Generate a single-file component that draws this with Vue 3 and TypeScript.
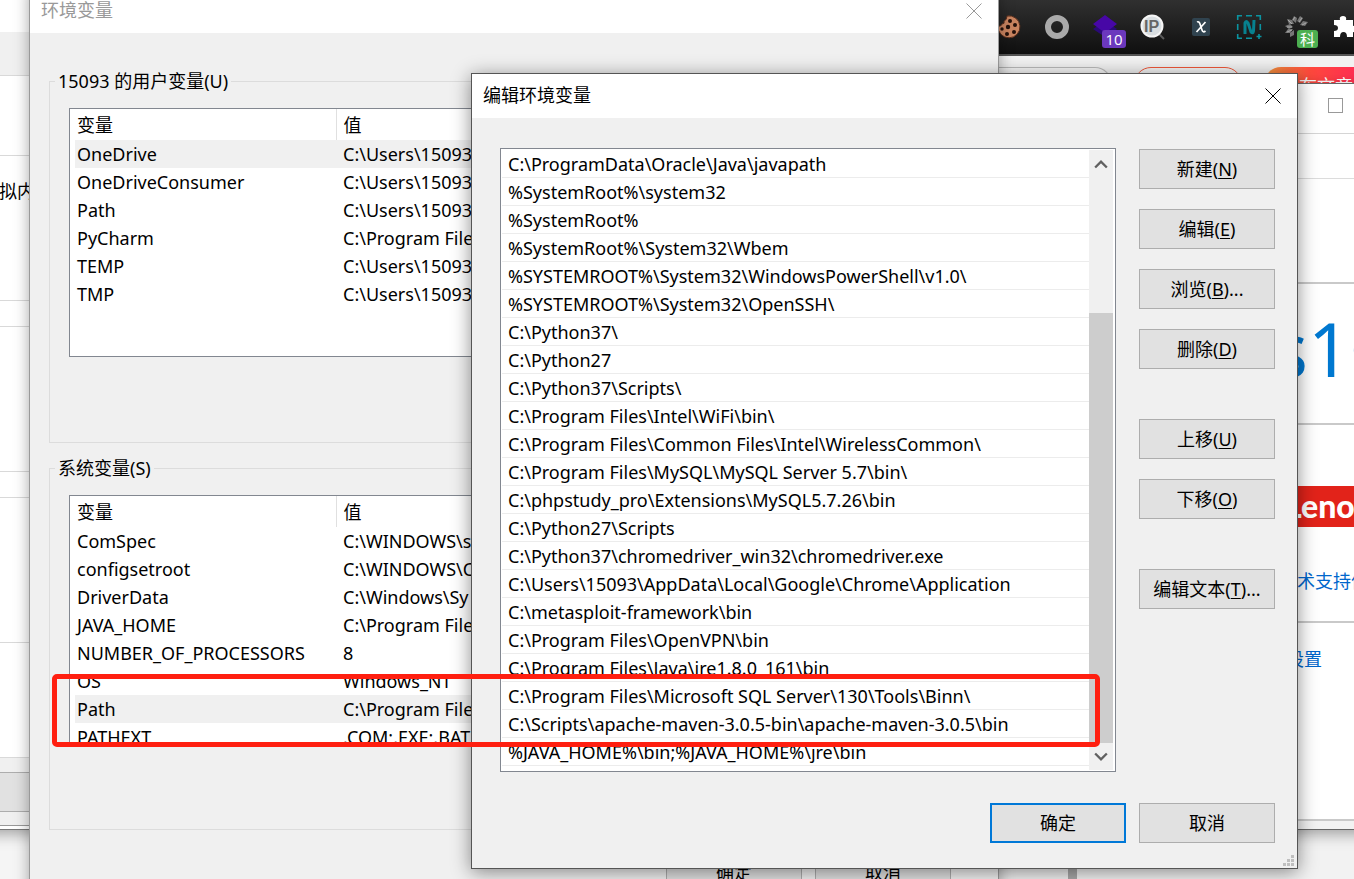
<script setup lang="ts">
interface Variable {
  name: string
  value: string
}
interface Action {
  label: string
  key: string
  more?: boolean
  spaced?: boolean
}

const userVars: Variable[] = [
  { name: 'OneDrive', value: 'C:\\Users\\15093' },
  { name: 'OneDriveConsumer', value: 'C:\\Users\\15093' },
  { name: 'Path', value: 'C:\\Users\\15093' },
  { name: 'PyCharm', value: 'C:\\Program File' },
  { name: 'TEMP', value: 'C:\\Users\\15093' },
  { name: 'TMP', value: 'C:\\Users\\15093' },
]

const systemVars: Variable[] = [
  { name: 'ComSpec', value: 'C:\\WINDOWS\\s' },
  { name: 'configsetroot', value: 'C:\\WINDOWS\\C' },
  { name: 'DriverData', value: 'C:\\Windows\\Sy' },
  { name: 'JAVA_HOME', value: 'C:\\Program File' },
  { name: 'NUMBER_OF_PROCESSORS', value: '8' },
  { name: 'OS', value: 'Windows_NT' },
  { name: 'Path', value: 'C:\\Program File' },
  { name: 'PATHEXT', value: '.COM;.EXE;.BAT' },
]

const groups = [
  { title: '15093 的用户变量(U)', rows: userVars, selected: 0 },
  { title: '系统变量(S)', rows: systemVars, selected: 6 },
]

const paths: string[] = [
  'C:\\ProgramData\\Oracle\\Java\\javapath',
  '%SystemRoot%\\system32',
  '%SystemRoot%',
  '%SystemRoot%\\System32\\Wbem',
  '%SYSTEMROOT%\\System32\\WindowsPowerShell\\v1.0\\',
  '%SYSTEMROOT%\\System32\\OpenSSH\\',
  'C:\\Python37\\',
  'C:\\Python27',
  'C:\\Python37\\Scripts\\',
  'C:\\Program Files\\Intel\\WiFi\\bin\\',
  'C:\\Program Files\\Common Files\\Intel\\WirelessCommon\\',
  'C:\\Program Files\\MySQL\\MySQL Server 5.7\\bin\\',
  'C:\\phpstudy_pro\\Extensions\\MySQL5.7.26\\bin',
  'C:\\Python27\\Scripts',
  'C:\\Python37\\chromedriver_win32\\chromedriver.exe',
  'C:\\Users\\15093\\AppData\\Local\\Google\\Chrome\\Application',
  'C:\\metasploit-framework\\bin',
  'C:\\Program Files\\OpenVPN\\bin',
  'C:\\Program Files\\Java\\jre1.8.0_161\\bin',
  'C:\\Program Files\\Microsoft SQL Server\\130\\Tools\\Binn\\',
  'C:\\Scripts\\apache-maven-3.0.5-bin\\apache-maven-3.0.5\\bin',
  '%JAVA_HOME%\\bin;%JAVA_HOME%\\jre\\bin',
]

const actions: Action[] = [
  { label: '新建', key: 'N' },
  { label: '编辑', key: 'E' },
  { label: '浏览', key: 'B', more: true },
  { label: '删除', key: 'D' },
  { label: '上移', key: 'U', spaced: true },
  { label: '下移', key: 'O' },
  { label: '编辑文本', key: 'T', more: true, spaced: true },
]
</script>

<template>
  <main class="desktop">
    <section class="browser">
      <div class="toolbar">
        <svg class="ext" viewBox="0 0 24 24">
          <path d="M10 1 A11 11 0 1 1 1 11 Q4 12 5 9 Q8 9 7 6 Q10 5 10 1Z" fill="#c98460" stroke="#5b2f1d" />
          <g fill="#24110b"><circle cx="13" cy="6" r="2" /><circle cx="18" cy="10" r="2" /><circle cx="11" cy="12" r="2.2" /><circle cx="17" cy="17" r="2" /><circle cx="10" cy="19" r="2" /><circle cx="5" cy="14" r="1.7" /></g>
        </svg>
        <svg class="ext" viewBox="0 0 24 24"><circle cx="12" cy="12" r="9" fill="none" stroke="#a9a9a9" stroke-width="6" /></svg>
        <span class="badged">
          <svg class="ext" viewBox="0 0 24 24"><path d="M0 14 L12 6 L24 14 L12 22Z" fill="#2a0a78" /><path d="M0 9 L12 0 L24 9 L12 18Z" fill="#4707a6" /></svg>
          <b class="badge purple">10</b>
        </span>
        <svg class="ext" viewBox="0 0 24 24">
          <path d="M17 18 L23 24" stroke="#5a5a5a" stroke-width="2" />
          <circle cx="11" cy="11" r="10.500" fill="#d9dee1" stroke="#f5f5f5" stroke-width="2" />
          <text x="3" y="17" class="ip">IP</text>
        </svg>
        <svg class="ext" viewBox="0 0 24 24"><rect x="3" y="3" width="18" height="18" rx="2" fill="#30434f" /><path d="M8 7 Q10 6 11 9 L13 15 Q14 18 16.500 16 M16.500 7 L7.500 17" fill="none" stroke="#fff" stroke-width="1.700" /></svg>
        <svg class="ext" viewBox="0 0 24 24">
          <path d="M0.700 5 V0.700 H5 M9 .7 H15 M19 .7 H23.300 V5 M.7 9 V15 M23.300 9 V15 M.7 19 V23.300 H5 M9 23.300 H15 M22 19 V24 M19.500 21.500 H24.500" fill="none" stroke="#0b93a0" stroke-width="1.600" />
          <path d="M8 19 V8 Q9 5 11 8 L14 17 Q16 19 16.500 16 L17 5" fill="none" stroke="#07818f" stroke-width="3" />
        </svg>
        <span class="badged">
          <svg class="ext" viewBox="0 0 24 24">
            <path d="M9 1 L12 3 L11 8 L7 5Z M15 1 L18 3 L15 8 L12 6Z M23 7 L20 11 L15 10 L18 6Z M2 4 L7 5 L9 9 L4 9Z M0 11 L5 9 L8 12 L4 14Z M0 18 L3 14 L8 14 L5 18Z M5 22 L5 18 L9 15 L9 20Z" fill="#777" />
            <path d="M10 2 L8 5 M17 3 L14 7 M21 8 L17 10 M3 5 L7 9 M2 12 L7 12 M2 17 L7 15" stroke="#a8a8a8" />
          </svg>
          <b class="badge green">科</b>
        </span>
        <svg class="ext" viewBox="0 0 24 24"><path d="M1 5 H7 Q6 1 10 1 Q14 1 13 5 H20 V11 Q24 10 24 14 Q24 18 20 17 V22 H14 Q14 17 10.500 17 Q7 17 7 22 H1 V16 Q5 16 5 13 Q5 10 1 10Z" fill="#fff" /></svg>
      </div>
      <div class="page-head">
        <span class="pill search"></span>
        <span class="pill outline"></span>
        <span class="pill publish">发布文章</span>
      </div>
    </section>

    <section class="system-window">
      <div class="system-title"><button class="maximize" aria-label="最大化"></button></div>
      <div class="system-nav"></div>
      <div class="system-gap"></div>
      <div class="edition"><span>s</span><span>10</span></div>
      <div class="vendor"><strong class="logo">Lenovo</strong><a href="#support">术支持信息</a></div>
      <div class="more"><a href="#settings">设置</a></div>
    </section>
    <div class="page-edge"></div>

    <section class="options-window">
      <div class="strip head"></div>
      <div class="strip tabs"></div>
      <div class="strip intro"></div>
      <div class="strip memory">拟内</div>
      <div class="strip gap"></div>
      <div class="strip block"></div>
      <div class="strip gap"></div>
      <div class="strip block"></div>
      <div class="strip rest"></div>
      <div class="strip foot"><button class="stub" aria-label="确定"></button></div>
    </section>

    <section class="dialog env" aria-label="环境变量">
      <header class="titlebar muted">
        <span>环境变量</span>
        <button class="close" aria-label="关闭"><svg viewBox="0 0 16 16"><path d="M.5 .5 L15.500 15.500 M15.500 .5 L.5 15.500" /></svg></button>
      </header>
      <div class="env-body">
        <fieldset v-for="g in groups" :key="g.title" class="group">
          <legend>{{ g.title }}</legend>
          <div class="var-list">
            <table>
              <thead><tr><th>变量</th><th>值</th></tr></thead>
              <tbody>
                <tr v-for="(r, i) in g.rows" :key="r.name" :class="{ selected: i === g.selected }">
                  <td>{{ r.name }}</td><td>{{ r.value }}</td>
                </tr>
              </tbody>
            </table>
          </div>
        </fieldset>
        <footer class="env-foot"><button class="btn">确定</button><button class="btn">取消</button></footer>
      </div>
    </section>

    <section class="dialog edit" aria-label="编辑环境变量">
      <header class="titlebar">
        <span>编辑环境变量</span>
        <button class="close" aria-label="关闭"><svg viewBox="0 0 16 16"><path d="M.5 .5 L15.500 15.500 M15.500 .5 L.5 15.500" /></svg></button>
      </header>
      <div class="edit-body">
        <div class="path-box">
          <ul class="paths"><li v-for="p in paths" :key="p">{{ p }}</li></ul>
          <div class="scrollbar">
            <button aria-label="向上滚动"><svg viewBox="0 0 12 10"><path d="M1 8 L6 3 L11 8" /></svg></button>
            <div class="track"><div class="thumb"></div></div>
            <button aria-label="向下滚动"><svg viewBox="0 0 12 10"><path d="M1 2 L6 7 L11 2" /></svg></button>
          </div>
        </div>
        <div class="actions">
          <button v-for="a in actions" :key="a.key" class="btn" :class="{ spaced: a.spaced }">{{ a.label }}(<u>{{ a.key }}</u>){{ a.more ? '...' : '' }}</button>
        </div>
      </div>
      <footer class="edit-foot"><button class="btn primary">确定</button><button class="btn">取消</button></footer>
      <svg class="grip" viewBox="0 0 11 11"><path d="M8 0h3v3h-3z M4 4h3v3h-3z M8 4h3v3h-3z M0 8h3v3h-3z M4 8h3v3h-3z M8 8h3v3h-3z" fill="#bfbfbf" /></svg>
    </section>

    <div class="marker"></div>
  </main>
</template>

<style>
body {
  margin: 0;
  overflow: hidden;
}
</style>

<style scoped>
* {
  box-sizing: border-box;
}
.desktop {
  position: relative;
  height: 100vh;
  overflow: hidden;
  background: #f5f5f5;
  color: #000;
  font: 18px/26px "Noto Sans", "Noto Sans CJK SC", sans-serif;
}
button {
  font: inherit;
  color: inherit;
  padding: 0;
}

/* browser */
.browser {
  position: absolute;
  inset: 0 0 auto 997px;
  height: 100%;
  background: #f2f2f2;
}
.toolbar {
  display: flex;
  align-items: center;
  gap: 24px;
  height: 56px;
  border-bottom: 2px solid #555;
  background: linear-gradient(#303030, #0f0f0f);
}
.ext {
  display: block;
  flex: none;
  width: 24px;
  height: 24px;
  overflow: visible;
}
.badged {
  position: relative;
}
.badge {
  position: absolute;
  left: 9px;
  top: 15px;
  min-width: 21px;
  height: 18px;
  border-radius: 3px;
  color: #fff;
  font: 15px/18px "Open Sans", "Noto Sans CJK SC", sans-serif;
  text-align: center;
}
.purple {
  min-width: 24px;
  background: #6b38bd;
}
.green {
  left: 12px;
  background: #4caf50;
}
.ip {
  font: bold 16px "Liberation Sans", sans-serif;
  fill: #666;
}
.page-head {
  display: flex;
  gap: 22px;
  padding-top: 11px;
}
.pill {
  flex: none;
  height: 34px;
  border-radius: 17px;
}
.search {
  width: 115px;
  border: 1px solid #bbb;
  border-left: 0;
  border-radius: 0 17px 17px 0;
  background: #f7f7f7;
}
.outline {
  width: 108px;
  border: 1px solid #f0583a;
  background: #f5f5f5;
}
.publish {
  width: 130px;
  padding-left: 17px;
  background: linear-gradient(90deg, #f79a3e, #ff4a3d 35%, #ff2a55 75%);
  color: #fff;
  line-height: 38px;
}

/* system information window */
.system-window {
  position: absolute;
  left: 1280px;
  right: -80px;
  top: 83px;
  border: 1px solid #666;
  background: #fff;
  box-shadow: 0 4px 14px rgba(0, 0, 0, 0.35);
}
.system-title {
  height: 50px;
  padding: 14px 0 0 47px;
  border-bottom: 1px solid #d5d5d5;
}
.maximize {
  display: block;
  width: 15px;
  height: 15px;
  border: 1px solid #999;
  background: #fff;
}
.system-nav {
  height: 45px;
  border-bottom: 1px solid #dcdcdc;
}
.system-gap {
  height: 105px;
  border-bottom: 2px solid #c9c9c9;
}
.edition {
  display: flex;
  height: 141px;
  padding-left: 15px;
  border-bottom: 2px solid #c9c9c9;
  color: #0078d0;
  font-size: 74px;
  line-height: 130px;
}
.edition span:first-child {
  display: flex;
  justify-content: flex-end;
  width: 12px;
}
.vendor {
  display: flex;
  flex-direction: column;
  gap: 41px;
  height: 198px;
  padding-top: 61px;
  border-bottom: 2px solid #c9c9c9;
}
.logo {
  height: 41px;
  padding-left: 4px;
  background: #e2231a;
  color: #fff;
  font: 900 32px/39px "Lato", sans-serif;
}
.more {
  height: 206px;
  padding-top: 23px;
  border-bottom: 8px solid #f2f2f2;
  box-shadow: inset 0 -2px #c9c9c9;
}
.vendor a,
.more a {
  color: #0066cc;
  text-decoration: none;
  white-space: nowrap;
}
.vendor a {
  padding-left: 16px;
}
.more a {
  padding-left: 5px;
}
.page-edge {
  position: absolute;
  left: 998px;
  bottom: 0;
  width: 79px;
  height: 50px;
  border-right: 9px solid #a9a9a9;
  background: #f0f0f0;
}

/* performance options window */
.options-window {
  position: absolute;
  left: -40px;
  top: 0;
  width: 80px;
  padding-left: 39px;
  border-bottom: 1px solid #777;
  background: #fff;
  box-shadow: 0 4px 14px rgba(0, 0, 0, 0.35);
}
.strip {
  border-bottom: 1px solid #d9d9d9;
  white-space: nowrap;
}
.head {
  height: 32px;
  border: 0;
}
.tabs {
  height: 44px;
  background: #f0f0f0;
}
.intro {
  height: 80px;
}
.memory {
  height: 145px;
  padding-top: 22px;
}
.gap {
  height: 26px;
}
.block {
  height: 145px;
}
.rest {
  height: 115px;
}
.foot {
  height: 68px;
  padding-top: 14px;
  border-bottom: 1px solid #999;
  background: #f0f0f0;
  margin-bottom: 3px;
}
.stub {
  display: block;
  width: 100%;
  height: 40px;
  border: solid #adadad;
  border-width: 1px 0;
  background: #e1e1e1;
}

/* dialogs */
.dialog {
  position: absolute;
  background: #f0f0f0;
}
.titlebar {
  display: flex;
  align-items: center;
  justify-content: space-between;
  height: 44px;
  padding: 0 16px 2px 11px;
  background: #fff;
}
.close {
  width: 16px;
  height: 16px;
  margin-top: 2px;
  border: 0;
  background: none;
}
.close svg {
  display: block;
  width: 16px;
  height: 16px;
  fill: none;
  stroke: #000;
}
.muted {
  color: #999;
}
.muted .close svg {
  stroke: #999;
}
.btn {
  width: 136px;
  height: 40px;
  border: 1px solid #adadad;
  background: #e1e1e1;
}
.btn u {
  text-decoration-thickness: 1px;
  text-underline-offset: 2px;
}
.primary {
  border: 2px solid #0078d7;
}

.env {
  left: 29px;
  right: 355px;
  top: -12px;
  border: 1px solid #999;
  box-shadow: 0 0 14px rgba(0, 0, 0, 0.35);
}
.env-body {
  padding: 35px 19px 20px;
}
.group {
  height: 375px;
  margin: 0 0 12px;
  padding: 14px 19px 0;
  border: 1px solid #dcdcdc;
}
.group legend {
  height: 26px;
  margin-left: -14px;
  padding: 0 3px;
}
.var-list {
  height: 249px;
  overflow: hidden;
  border: 1px solid #828790;
  background: #fff;
}
.var-list table {
  width: 100%;
  table-layout: fixed;
  border-collapse: collapse;
}
.var-list th,
.var-list td {
  height: 28px;
  padding: 0 0 0 7px;
  line-height: 28px;
  font-weight: normal;
  text-align: left;
  white-space: nowrap;
}
.var-list th {
  height: 31px;
}
.var-list th:first-child {
  width: 266px;
  border-right: 1px solid #e0e0e0;
}
.selected {
  background: linear-gradient(90deg, #fff 5px, #f0f0f0 5px);
}
.env-foot {
  display: flex;
  justify-content: flex-end;
  gap: 13px;
  padding: 10px 28px 0 0;
}

.edit {
  left: 471px;
  right: 56px;
  top: 73px;
  border: 1px solid #555;
  box-shadow: 0 3px 18px rgba(0, 0, 0, 0.45);
}
.edit-body {
  display: flex;
  gap: 23px;
  padding: 30px 22px 0 28px;
}
.path-box {
  display: flex;
  flex: 1;
  min-width: 0;
  padding: 1px 2px 1px 1px;
  border: 1px solid #828790;
  background: #fff;
}
.paths {
  flex: 1;
  min-width: 0;
  margin: 0;
  padding: 0 0 4px;
  list-style: none;
}
.paths li {
  height: 28px;
  padding: 1px 0 0 6px;
  border-bottom: 1px solid #ececec;
  line-height: 26px;
  white-space: nowrap;
}
.scrollbar {
  display: flex;
  flex-direction: column;
  width: 24px;
  background: #f0f0f0;
}
.scrollbar button {
  height: 27px;
  border: 0;
  background: none;
}
.scrollbar svg {
  display: block;
  width: 14px;
  height: 12px;
  margin: auto;
  fill: none;
  stroke: #606060;
  stroke-width: 2;
}
.track {
  display: flex;
  flex: 1;
  flex-direction: column;
  justify-content: flex-end;
}
.thumb {
  height: 76%;
  background: #cdcdcd;
}
.actions {
  display: flex;
  flex-direction: column;
  gap: 20px;
  padding-top: 1px;
}
.spaced {
  margin-top: 30px;
}
.edit-foot {
  display: flex;
  justify-content: flex-end;
  gap: 13px;
  padding: 31px 22px 25px;
}
.grip {
  position: absolute;
  right: 3px;
  bottom: 2px;
  width: 11px;
  height: 11px;
}

.marker {
  position: absolute;
  left: 52px;
  right: 254px;
  top: 674px;
  height: 73px;
  border: 5px solid #ff1f10;
  border-radius: 5px;
}
</style>
